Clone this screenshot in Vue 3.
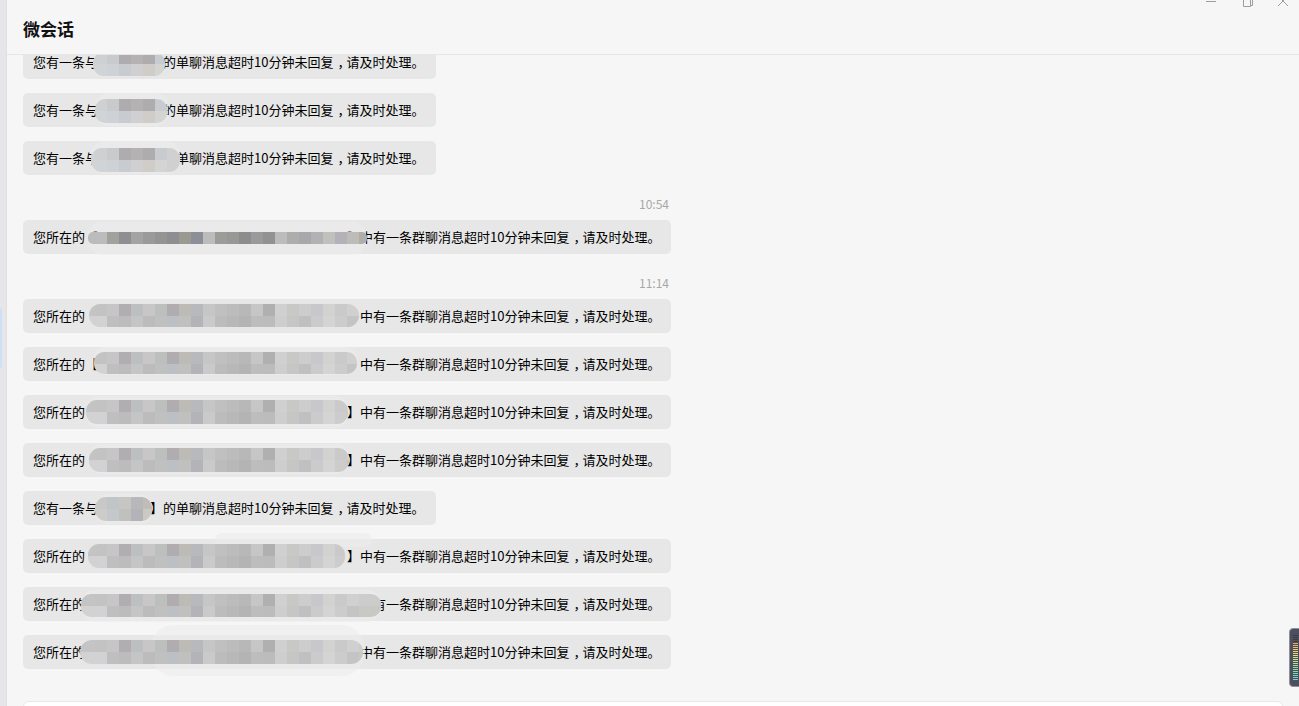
<script setup>
const light = [
  ['#c4c4c4','#c4c4c4','#c3c3c3','#c6c6c6','#b0aeb0','#bcc0c0','#c8c6c6','#bdbfbd','#b1acb0','#bcbbb6','#b8b9bd','#c6c6c6','#c0c0c0','#bcbcbc','#b8b8b8','#c6c6c6','#b0b0b0','#d0d0d0','#c8c8c6','#cdcdcd','#c8c8cc','#d2d2d0','#cacaca','#d0d0d0','#cccccc','#cccccc'],
  ['#d2d2d4','#d2d2d4','#d2d2d4','#c0bfc0','#bcbcbc','#c4c6c6','#bcbcbc','#c0c0c0','#bcc0c4','#c0c0be','#b4b4b8','#cacaca','#bcbcbc','#b8b8b8','#b4b4b4','#bcbebc','#bcbcbc','#cecece','#c6c6c4','#c0c0c2','#cacccc','#d4d4d2','#cccccc','#c4c4c4','#c8c8c4','#c8c8c4']
]
const dark = [
  ['#bcbcbc','#bcbcbc','#bcbcbc','#a2a19c','#8f8f93','#a3a4a1','#9b9a9a','#949492','#8e8e92','#9a9a90','#8c8e98','#bcbcbc','#9c9c98','#989896','#8c8e8c','#9a9a9c','#929292','#bcbcbc','#adadab','#a8a8aa','#b2b2b4','#c0c0bc','#b4b2b8','#bcbcb8','#b0aeaa','#b0aeaa']
]
const single = [
  ['#d0d2d4','#d0d2d4','#cfd0d2','#c8cacc','#aeacae','#b4b2b2','#aeacac','#c8ccd0','#d0d0d0','#d0d0d0'],
  ['#d0d4d6','#d0d4d6','#d0d4d6','#ccd2d6','#c8ccd0','#d0d0d2','#d0ccc8','#d4d4d2','#d0d0d0','#d0d0d0']
]
const single2 = [
  ['#c8c8c8','#c8c8c8','#c8c8c8','#c0c6c8','#c8c6c4','#b8b8bc','#c0bcb8'],
  ['#ccccc8','#ccccc8','#ccccc8','#c4c8ca','#c0c0bc','#b4b4b8','#ccc8c2']
]

const rows = [
  { type: 'msg', kind: 'single', top: 45, palette: single, gy: 52, clip: [93, 52, 72, 24, 11] },
  { type: 'msg', kind: 'single', top: 93, palette: single, gy: 99, clip: [95, 99, 72, 24, 10], halo: [96, 93, 72, 33, 12] },
  { type: 'msg', kind: 'single', top: 141, palette: single, gy: 148, clip: [91, 148, 89, 24, 11], halo: [91, 141, 89, 33, 14] },
  { type: 'time', label: '10:54' },
  { type: 'msg', kind: 'group', top: 220, palette: dark, gy: 232, clip: [88, 232, 279, 12, 5], halo: [88, 222, 278, 33, 14] },
  { type: 'time', label: '11:14' },
  { type: 'msg', kind: 'group', top: 299, palette: light, gy: 304, clip: [89, 304, 270, 23, 12] },
  { type: 'msg', kind: 'group', top: 347, palette: light, gy: 352, clip: [94, 352, 263, 22, 10], halo: [94, 347, 263, 28, 12] },
  { type: 'msg', kind: 'group', top: 395, palette: light, gy: 400, clip: [86, 400, 262, 24, 11], halo: [86, 396, 262, 32, 13] },
  { type: 'msg', kind: 'group', top: 443, palette: light, gy: 448, clip: [89, 448, 260, 24, 11], halo: [89, 444, 260, 30, 13] },
  { type: 'msg', kind: 'single', top: 491, palette: single2, gy: 497, clip: [95, 497, 57, 24, 11], halo: [95, 494, 57, 30, 13] },
  { type: 'msg', kind: 'group', top: 539, palette: light, gy: 544, clip: [88, 544, 257, 24, 11], halo: [215, 533, 157, 14, 8] },
  { type: 'msg', kind: 'group', top: 587, palette: light, gy: 594, clip: [81, 594, 300, 23, 10], halo: [81, 590, 300, 32, 14] },
  { type: 'msg', kind: 'group', top: 635, palette: light, gy: 640, clip: [80, 640, 283, 24, 12], halo: [150, 625, 215, 51, 24] }
].map((r, i) => ({ ...r, id: i }))

const box = (r, b) => ({
  left: b[0] - 23 + 'px',
  top: b[1] - r.top + 'px',
  width: b[2] + 'px',
  height: b[3] + 'px',
  borderRadius: b[4] + 'px'
})
const gridPos = (r) => ({
  left: 71 - r.clip[0] + 'px',
  top: r.gy - r.clip[1] + 'px',
  gridTemplateColumns: `repeat(${r.palette[0].length}, 12px)`
})

const ramp = ['#3a3d47', '#3a3d47', '#3a3d47', '#3a3d47', '#eda46a', '#eeb06c', '#efbc70', '#efc874', '#eed478', '#ecdc7a', '#e8e07c', '#dde27e', '#cfe284', '#c0e28a', '#b0e292', '#a2e29a', '#94e0a2', '#88deaa', '#7edcb2', '#76dcba', '#70dac0', '#6cd8c6', '#6ad8cc']
</script>

<template>
  <div class="app">
    <aside class="rail"><div class="rail-active"></div></aside>
    <main class="main">
      <header class="header">
        <h1 class="title">微会话</h1>
        <div class="controls">
          <svg class="ctl ctl-min" width="10" height="8" viewBox="0 0 10 8"><path d="M0 1.5H10" /></svg>
          <svg class="ctl ctl-max" width="10" height="8" viewBox="0 0 10 8"><path d="M.5 0V6.5H7.5V0M7.5 5.5H9.5V0" /></svg>
          <svg class="ctl ctl-close" width="10" height="8" viewBox="0 0 10 8"><path d="M0 -4L10 6M10 -4L0 6" /></svg>
        </div>
      </header>
      <section class="list">
        <div class="list-inner">
          <template v-for="r in rows" :key="r.id">
            <div v-if="r.type === 'time'" class="stamp">{{ r.label }}</div>
            <div v-else class="bubble" :class="r.kind">
              <template v-if="r.kind === 'group'">您所在的【<span class="name-group"></span>】中有一条群聊消息超时10分钟未回复<span class="comma">，</span>请及时处理。</template>
              <template v-else>您有一条与【<span class="name-single"></span>】的单聊消息超时10分钟未回复<span class="comma">，</span>请及时处理。</template>
              <div v-if="r.halo" class="halo" :style="box(r, r.halo)"></div>
              <div class="blur" :style="box(r, r.clip)">
                <div class="mosaic" :style="gridPos(r)">
                  <template v-for="(line, li) in r.palette" :key="li">
                    <span v-for="(c, ci) in line" :key="ci" class="cell" :style="{ background: c }"></span>
                  </template>
                </div>
              </div>
            </div>
          </template>
        </div>
      </section>
      <footer class="compose"><div class="compose-box"></div></footer>
    </main>
    <div class="meter">
      <span v-for="(c, i) in ramp" :key="i" class="tick" :style="{ background: c }"></span>
    </div>
  </div>
</template>

<style>
html, body { margin: 0; background: #f6f6f6; overflow: hidden; }
</style>

<style scoped>
.app {
  position: relative;
  display: flex;
  width: 1299px;
  height: 706px;
  overflow: hidden;
  background: #f6f6f6;
  color: #000;
  font-family: "Noto Sans CJK SC", "Liberation Sans", sans-serif;
}
.rail {
  position: relative;
  flex: 0 0 6px;
  background: #e6e6e8;
  border-right: 1px solid #e0e0e0;
}
.rail-active {
  position: absolute;
  left: 0;
  top: 308px;
  width: 2px;
  height: 60px;
  background: #cfdff5;
  border-radius: 0 2px 2px 0;
}
.main {
  flex: 1;
  min-width: 0;
  display: flex;
  flex-direction: column;
}
.header {
  position: relative;
  z-index: 2;
  flex: 0 0 55px;
  box-sizing: border-box;
  display: flex;
  align-items: center;
  padding: 3px 16px 0;
  background: #f6f6f6;
  border-bottom: 1px solid #e6e6e6;
}
.title {
  margin: 0;
  font-size: 17px;
  font-weight: 700;
  line-height: 24px;
  color: #111;
}
.controls {
  position: absolute;
  top: 0;
  right: 11px;
  display: flex;
}
.ctl { display: block; fill: none; stroke: #9c9ca2; stroke-width: 1; }
.ctl-max { margin-left: 27px; }
.ctl-close { margin-left: 25px; }
.list {
  flex: 1;
  min-height: 0;
  overflow: hidden;
  padding: 0 16px;
}
.list-inner {
  margin-top: -10px;
  width: 648px;
  display: flex;
  flex-direction: column;
  align-items: flex-start;
}
.stamp {
  align-self: stretch;
  margin: 8px 0 9px;
  padding-right: 2px;
  height: 14px;
  line-height: 14px;
  font-size: 12px;
  text-align: right;
  color: #a8a8aa;
}
.bubble {
  position: relative;
  box-sizing: border-box;
  height: 34px;
  margin-bottom: 14px;
  padding: 0 10px;
  line-height: 34px;
  font-size: 13px;
  white-space: nowrap;
  background: #e7e7e7;
  border-radius: 5px;
}
.group { width: 648px; }
.single { width: 413px; }
.name-group { display: inline-block; width: 249px; }
.name-single { display: inline-block; width: 39px; }
.comma { padding-left: 4px; letter-spacing: -4px; }
.halo {
  position: absolute;
  background: rgba(236, 236, 236, 0.6);
}
.blur {
  position: absolute;
  overflow: hidden;
}
.mosaic {
  position: absolute;
  display: grid;
  grid-auto-rows: 12px;
}
.cell { display: block; }
.compose {
  flex: 0 0 5px;
  overflow: hidden;
  padding: 0 16px;
}
.compose-box {
  box-sizing: border-box;
  height: 20px;
  background: #fff;
  border: 1px solid #e8e8e8;
  border-radius: 6px;
}
.meter {
  position: absolute;
  left: 1289px;
  top: 628px;
  width: 14px;
  height: 59px;
  box-sizing: border-box;
  padding: 6px 0 0 3px;
  display: flex;
  flex-direction: column;
  gap: 1px;
  background: #4d505c;
  border: 1px solid #8e9099;
  border-radius: 4px;
}
.tick { display: block; width: 5px; height: 1px; }
</style>
